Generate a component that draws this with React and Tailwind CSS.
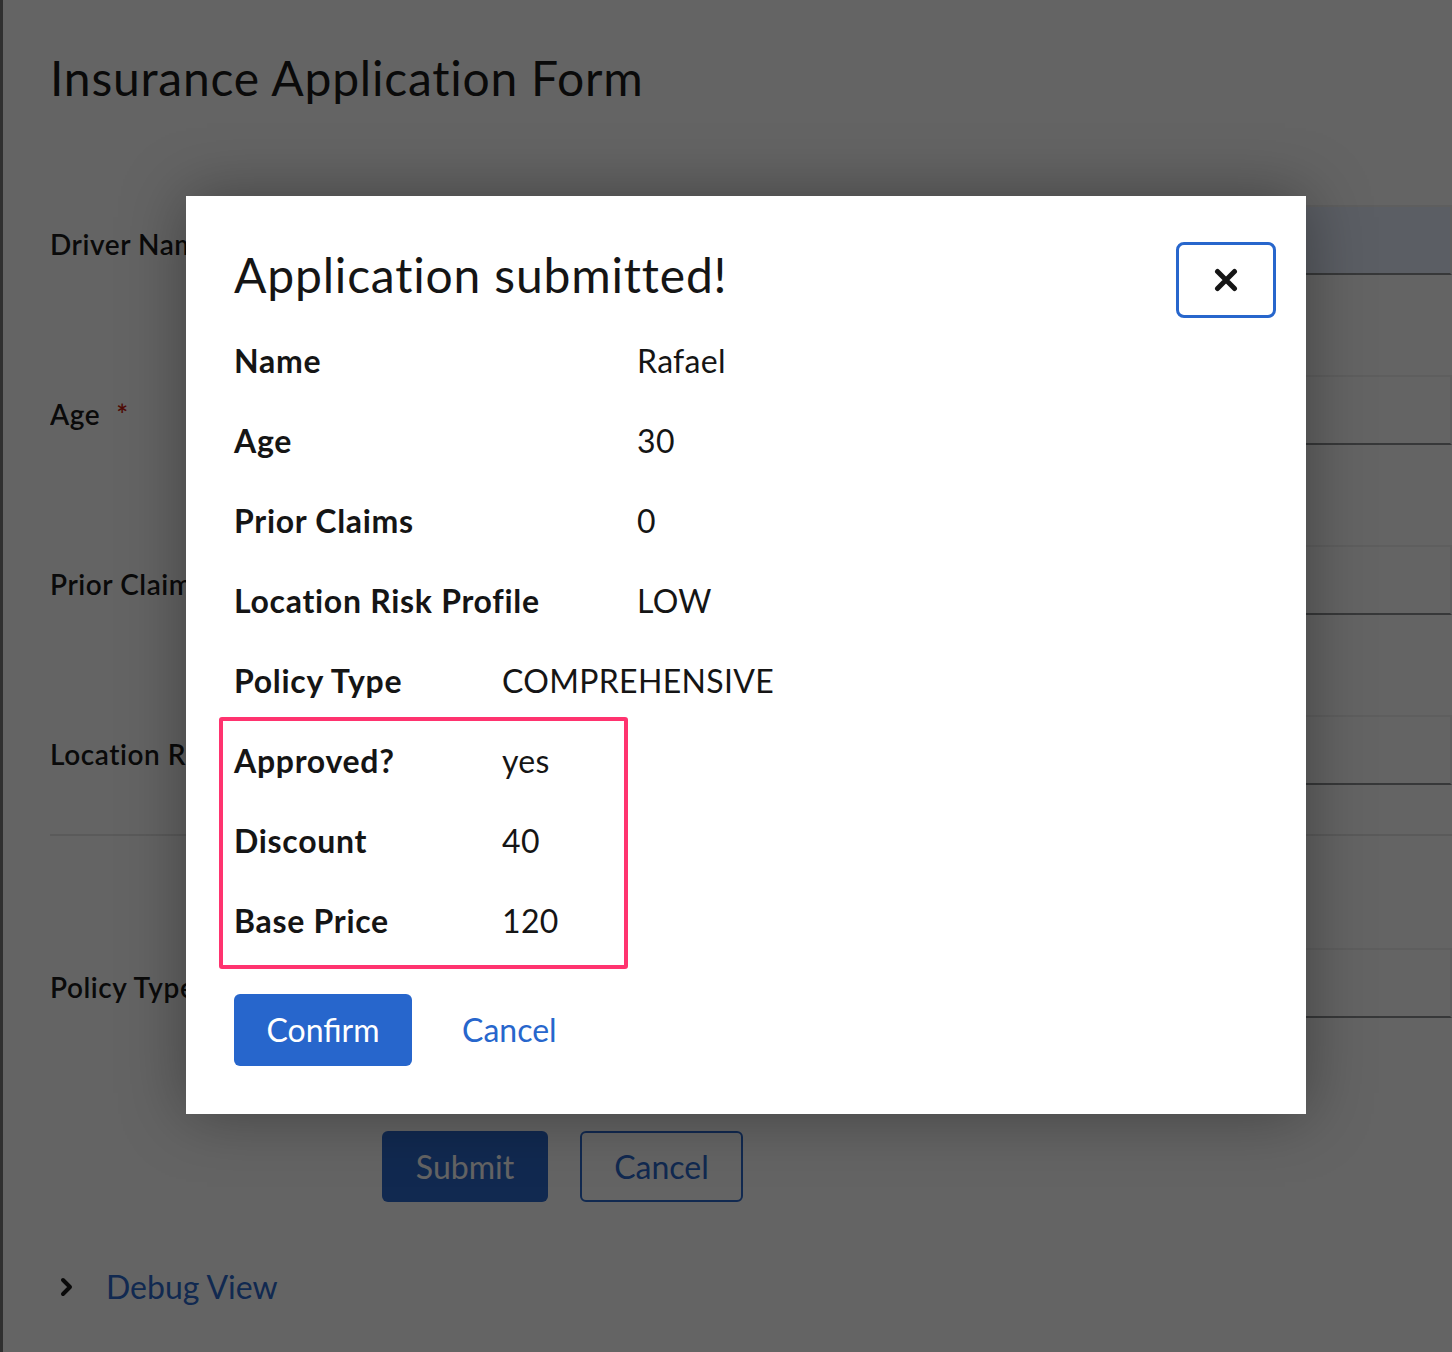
import React from "react";

const font = { fontFamily: "Lato, 'Open Sans', sans-serif" };

function FormRow({ label, required, blue, className = "" }) {
  return (
    <div className={"flex items-center " + className}>
      <div className="w-[332px] shrink-0 pt-[8px] text-[28px] font-semibold tracking-[0.02em] text-[#151515]">
        <div className="w-[136px] overflow-hidden whitespace-nowrap">
          {label}
          {required && <span className="ml-[16px] text-[#c9190b]">*</span>}
        </div>
      </div>
      <div
        className={
          "h-[70px] flex-1 border-x-2 border-t-2 border-b-2 border-x-[#f0f0f0] border-t-[#f0f0f0] border-b-[#8a8d90] " +
          (blue ? "bg-[#e8f0fe]" : "bg-white")
        }
      />
    </div>
  );
}

function Row({ label, value }) {
  return (
    <>
      <div className="flex h-[80px] items-center text-[32px] font-bold tracking-[0.022em] text-[#151515]">{label}</div>
      <div className="flex h-[80px] items-center text-[32px] tracking-[0.01em] text-[#151515]">{value}</div>
    </>
  );
}

export default function App() {
  return (
    <div style={font} className="relative h-[1352px] w-full overflow-hidden bg-white">
      {/* background page */}
      <div className="flex h-full border-l-[3px] border-[#777777]">
        <div className="flex flex-1 flex-col pl-[47px]">
          <h1 className="mt-[48px] text-[48px] leading-[60px] tracking-[0.016em] text-[#151515]">Insurance Application Form</h1>
          <div className="mt-[97px] flex flex-col">
            <FormRow label="Driver Name" blue />
            <FormRow label="Age" required className="mt-[100px]" />
            <FormRow label="Prior Claims" className="mt-[100px]" />
            <FormRow label="Location Risk Profile" className="mt-[100px]" />
            <div className="mt-[49px] h-[2px] bg-[#e4e4e4]" />
            <FormRow label="Policy Type" className="mt-[112px]" />
          </div>
          <div className="mt-[113px] flex gap-[32px] pl-[332px]">
            <button className="h-[71px] w-[166px] rounded-[6px] bg-[#2766cc] text-[32px] text-white">Submit</button>
            <button className="h-[71px] w-[163px] rounded-[6px] border-2 border-[#2766cc] text-[32px] text-[#2766cc]">Cancel</button>
          </div>
          <div className="mt-[61px] flex items-center gap-[32px] pl-[10px]">
            <svg width="14" height="20" viewBox="0 0 14 20">
              <path d="M3 3 L10 10 L3 17" fill="none" stroke="#151515" strokeWidth="4" strokeLinecap="round" strokeLinejoin="round" />
            </svg>
            <span className="text-[32px] text-[#2766cc]">Debug View</span>
          </div>
        </div>
      </div>

      {/* overlay */}
      <div className="absolute inset-0 bg-[rgba(3,3,3,0.615)]">
        <div className="absolute left-[186px] top-[196px] w-[1120px] bg-white px-[48px] pb-[48px] pt-[48px] shadow-[0_0_60px_rgba(0,0,0,0.35)]">
          <button className="absolute right-[30px] top-[46px] flex h-[76px] w-[100px] items-center justify-center rounded-[8px] border-[3px] border-[#2766cc] bg-white">
            <svg width="24" height="24" viewBox="0 0 24 24">
              <path d="M3.5 3.5 L20.5 20.5 M20.5 3.5 L3.5 20.5" stroke="#151515" strokeWidth="5" strokeLinecap="round" />
            </svg>
          </button>
          <h2 className="h-[64px] text-[48px] leading-[62px] tracking-[0.017em] text-[#151515]">Application submitted!</h2>
          <div className="mt-[13px] grid grid-cols-[403px_auto]">
            <Row label="Name" value="Rafael" />
            <Row label="Age" value="30" />
            <Row label="Prior Claims" value="0" />
            <Row label="Location Risk Profile" value="LOW" />
          </div>
          <div className="grid grid-cols-[268px_auto]">
            <Row label="Policy Type" value="COMPREHENSIVE" />
          </div>
          <div className="ml-[-15px] mt-[-4px] w-[409px] rounded-[3px] border-4 border-[#ff336f] pb-[4px] pl-[11px]">
            <div className="grid grid-cols-[268px_auto]">
              <Row label="Approved?" value="yes" />
              <Row label="Discount" value="40" />
              <Row label="Base Price" value="120" />
            </div>
          </div>
          <div className="mt-[25px] flex items-center gap-[50px]">
            <button className="h-[72px] w-[178px] rounded-[6px] bg-[#2766cc] text-[32px] text-white">Confirm</button>
            <button className="text-[32px] text-[#2766cc]">Cancel</button>
          </div>
        </div>
      </div>
    </div>
  );
}
